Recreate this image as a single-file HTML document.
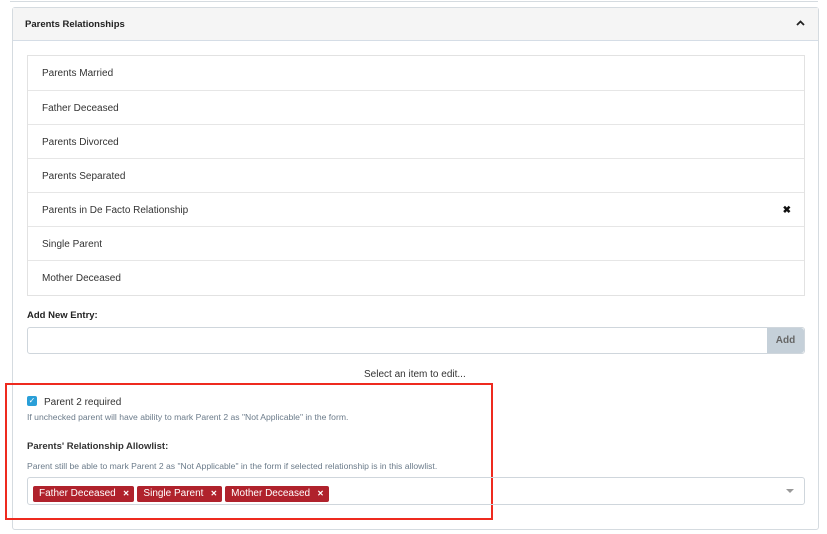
<!DOCTYPE html><html><head><style>
body{margin:0;width:827px;height:534px;background:#fff;font-family:"Liberation Sans",sans-serif;position:relative;overflow:hidden;color:#222}
.a{position:absolute}
.row{position:absolute;left:0;right:0;height:34px;border-top:1px solid #e6e6e6;font-size:10px;line-height:36px;padding-left:14px;color:#333}
.tag{display:inline-block;background:#b0222c;color:#fff;font-size:10px;height:16px;line-height:16px;padding:0 5px 0 6px;border-radius:2px;margin-right:3px}
.tag b{font-size:8px;margin-left:7px}
</style></head><body>
<div class="a" style="left:10px;top:0;width:808px;height:1px;border-bottom:1px solid #d5dbe0"></div>
<div class="a" style="left:12px;top:7px;width:805px;height:521px;border:1px solid #d5dbe0;border-radius:3px"></div>
<div class="a" style="left:13px;top:8px;width:805px;height:32px;background:#f5f5f5;border-bottom:1px solid #d5dde6"></div>
<div class="a" style="left:25px;top:19px;font-size:9.5px;font-weight:bold">Parents Relationships</div>
<svg class="a" style="left:796px;top:20px" width="9" height="7"><path d="M1 5L4.5 1.5L8 5" stroke="#222" stroke-width="1.8" fill="none"/></svg>
<div class="a" style="left:27px;top:55px;width:776px;height:239px;border:1px solid #e2e2e2">
<div class="row" style="top:0;border-top:0">Parents Married</div>
<div class="row" style="top:34px">Father Deceased</div>
<div class="row" style="top:68px">Parents Divorced</div>
<div class="row" style="top:102px">Parents Separated</div>
<div class="row" style="top:136px">Parents in De Facto Relationship<span style="position:absolute;right:13px;font-size:10px;font-weight:bold;color:#111">✖</span></div>
<div class="row" style="top:170px">Single Parent</div>
<div class="row" style="top:204px">Mother Deceased</div>
</div>
<div class="a" style="left:27px;top:310px;font-size:9.5px;font-weight:bold">Add New Entry:</div>
<div class="a" style="left:27px;top:327px;width:776px;height:25px;border:1px solid #cfd6dc;border-radius:3px"></div>
<div class="a" style="left:767px;top:328px;width:37px;height:25px;background:#c5d0d9;border-radius:0 3px 3px 0;font-size:10px;font-weight:bold;color:#666;text-align:center;line-height:25px">Add</div>
<div class="a" style="left:364px;top:369px;font-size:10px;color:#333">Select an item to edit...</div>
<div class="a" style="left:5px;top:383px;width:484px;height:133px;border:2px solid #ee2a1f"></div>
<div class="a" style="left:27px;top:396px;width:10px;height:10px;background:#2a9fd8;border-radius:2px;color:#fff;font-size:8px;line-height:10px;text-align:center">✓</div>
<div class="a" style="left:44px;top:397px;font-size:10px;color:#333">Parent 2 required</div>
<div class="a" style="left:27px;top:412px;font-size:8.6px;color:#6b7b8a">If unchecked parent will have ability to mark Parent 2 as "Not Applicable" in the form.</div>
<div class="a" style="left:27px;top:441px;font-size:9.5px;font-weight:bold;color:#333">Parents' Relationship Allowlist:</div>
<div class="a" style="left:27px;top:461px;font-size:8.6px;color:#6b7b8a">Parent still be able to mark Parent 2 as "Not Applicable" in the form if selected relationship is in this allowlist.</div>
<div class="a" style="left:27px;top:477px;width:776px;height:26px;border:1px solid #cfd6dc;border-radius:3px"></div>
<div class="a" style="left:33px;top:483px;white-space:nowrap"><span class="tag">Father Deceased<b>✕</b></span><span class="tag">Single Parent<b>✕</b></span><span class="tag">Mother Deceased<b>✕</b></span></div>
<div class="a" style="left:786px;top:489px;width:0;height:0;border-left:4px solid transparent;border-right:4px solid transparent;border-top:4px solid #999"></div>
</body></html>
